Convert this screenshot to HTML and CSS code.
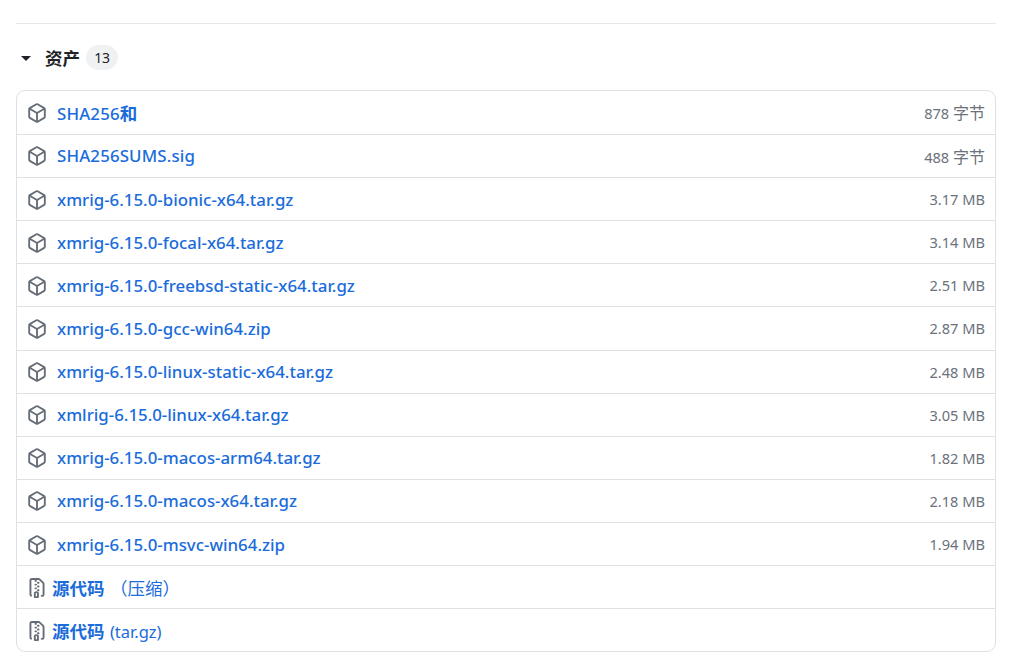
FILE: index.html
```html
<!DOCTYPE html>
<html lang="zh">
<head>
<meta charset="utf-8">
<title>资产</title>
<link rel="stylesheet" href="styles.css">
</head>
<body>
<svg class="defs" width="0" height="0">
<symbol id="pkg" viewBox="0 0 16 16"><path d="m8.878.392 5.25 3.045c.54.314.872.89.872 1.514v6.098a1.75 1.75 0 0 1-.872 1.514l-5.25 3.045a1.75 1.75 0 0 1-1.756 0l-5.25-3.045A1.75 1.75 0 0 1 1 11.049V4.951c0-.624.332-1.201.872-1.514L7.122.392a1.75 1.75 0 0 1 1.756 0ZM7.875 1.69l-4.63 2.685L8 7.133l4.755-2.758-4.63-2.685a.248.248 0 0 0-.25 0ZM2.5 5.677v5.372c0 .09.047.171.125.216l4.625 2.683V8.432Zm6.25 8.271 4.625-2.683a.25.25 0 0 0 .125-.216V5.677L8.75 8.432Z"/></symbol>
<symbol id="zip" viewBox="0 0 16 16"><path d="M3.5 1.75v11.5c0 .09.048.173.126.217a.75.75 0 0 1-.752 1.298A1.748 1.748 0 0 1 2 13.25V1.75C2 .784 2.784 0 3.75 0h5.586c.464 0 .909.185 1.237.513l2.914 2.914c.329.328.513.773.513 1.237v8.586A1.75 1.75 0 0 1 12.25 15h-.5a.75.75 0 0 1 0-1.5h.5a.25.25 0 0 0 .25-.25V4.664a.25.25 0 0 0-.073-.177L9.513 1.573a.25.25 0 0 0-.177-.073H7.25a.75.75 0 0 1 0 1.5h-.5a.75.75 0 0 1 0-1.5h-3a.25.25 0 0 0-.25.25Zm3.75 8.75h.5c.966 0 1.75.784 1.75 1.75v3a.75.75 0 0 1-.75.75h-2.5a.75.75 0 0 1-.75-.75v-3c0-.966.784-1.75 1.75-1.75ZM6 5.25a.75.75 0 0 1 .75-.75h.5a.75.75 0 0 1 0 1.5h-.5A.75.75 0 0 1 6 5.25Zm.75 2.25h.5a.75.75 0 0 1 0 1.5h-.5a.75.75 0 0 1 0-1.5ZM8 6.75A.75.75 0 0 1 8.75 6h.5a.75.75 0 0 1 0 1.5h-.5A.75.75 0 0 1 8 6.75ZM8.75 3h.5a.75.75 0 0 1 0 1.5h-.5a.75.75 0 0 1 0-1.5ZM8 9.75A.75.75 0 0 1 8.75 9h.5a.75.75 0 0 1 0 1.5h-.5A.75.75 0 0 1 8 9.75Zm-1 2.5v2.25h1v-2.25a.25.25 0 0 0-.25-.25h-.5a.25.25 0 0 0-.25.25Z"/></symbol>
</svg>
<main class="page">
<hr class="rule">
<div class="summary">
<span class="caret"></span>
<h2 class="title">资产</h2>
<span class="counter">13</span>
</div>
<ul class="assets">
<li class="row"><svg class="ico"><use href="#pkg"/></svg><a class="name name-caps">SHA256<span class="cjk">和</span></a><span class="size">878 <span class="unit">字节</span></span></li>
<li class="row"><svg class="ico"><use href="#pkg"/></svg><a class="name name-caps">SHA256SUMS.sig</a><span class="size">488 <span class="unit">字节</span></span></li>
<li class="row"><svg class="ico"><use href="#pkg"/></svg><a class="name">xmrig-6.15.0-bionic-x64.tar.gz</a><span class="size">3.17 MB</span></li>
<li class="row"><svg class="ico"><use href="#pkg"/></svg><a class="name">xmrig-6.15.0-focal-x64.tar.gz</a><span class="size">3.14 MB</span></li>
<li class="row"><svg class="ico"><use href="#pkg"/></svg><a class="name">xmrig-6.15.0-freebsd-static-x64.tar.gz</a><span class="size">2.51 MB</span></li>
<li class="row"><svg class="ico"><use href="#pkg"/></svg><a class="name">xmrig-6.15.0-gcc-win64.zip</a><span class="size">2.87 MB</span></li>
<li class="row"><svg class="ico"><use href="#pkg"/></svg><a class="name">xmrig-6.15.0-linux-static-x64.tar.gz</a><span class="size">2.48 MB</span></li>
<li class="row"><svg class="ico"><use href="#pkg"/></svg><a class="name">xmlrig-6.15.0-linux-x64.tar.gz</a><span class="size">3.05 MB</span></li>
<li class="row"><svg class="ico"><use href="#pkg"/></svg><a class="name">xmrig-6.15.0-macos-arm64.tar.gz</a><span class="size">1.82 MB</span></li>
<li class="row"><svg class="ico"><use href="#pkg"/></svg><a class="name">xmrig-6.15.0-macos-x64.tar.gz</a><span class="size">2.18 MB</span></li>
<li class="row"><svg class="ico"><use href="#pkg"/></svg><a class="name">xmrig-6.15.0-msvc-win64.zip</a><span class="size">1.94 MB</span></li>
<li class="row"><svg class="ico ico-zip"><use href="#zip"/></svg><a class="name"><b class="src">源代码</b> <span class="ext ext-cn">（压缩）</span></a></li>
<li class="row"><svg class="ico ico-zip"><use href="#zip"/></svg><a class="name"><b class="src">源代码</b> <span class="ext">(tar.gz)</span></a></li>
</ul>
</main>
</body>
</html>
```
FILE: styles.css
```css
* { box-sizing: border-box; }
html, body { margin: 0; padding: 0; background: #fff; }
body {
  font-family: "Noto Sans", "Noto Sans CJK SC", sans-serif;
  color: #1f2328;
  height: 663px;
  overflow: hidden;
}
.defs { position: absolute; }
.page { padding: 23px 28px 0 16px; }
.rule { margin: 0; height: 1.4px; border: 0; background: #e4e7eb; }
.summary {
  display: flex;
  align-items: center;
  height: 65.4px;
  padding: 1px 0 0 5px;
}
.caret {
  width: 0; height: 0;
  border-style: solid;
  border-width: 5px 5px 0;
  border-color: #1f2328 transparent transparent;
  margin-right: 14px;
  margin-top: 2px;
}
.title { margin: 0; font-size: 17.5px; font-weight: 600; line-height: 24px; }
.counter {
  margin-left: 6px;
  min-width: 32px;
  height: 25px;
  padding: 0 7px;
  border-radius: 13px;
  background: #eff1f3;
  font-size: 14px;
  line-height: 25px;
  text-align: center;
  letter-spacing: -0.3px;
}
.assets {
  list-style: none;
  margin: 0;
  padding: 0;
  border: 1.2px solid #dde1e6;
  border-radius: 9px;
}
.row {
  display: flex;
  align-items: center;
  height: 43.13px;
  padding: 0 10px 0 10px;
  border-top: 1.2px solid #dde1e6;
}
.row:first-child { border-top: 0; }
.ico { width: 20px; height: 20px; fill: #656d76; flex: none; margin: 1px 10px 0 0; }
.ico-zip { margin-right: 5px; }
.name { color: #1a6cdb; font-size: 16.85px; font-weight: 500; white-space: pre; flex: 1; }
.name-caps { letter-spacing: 0.15px; }
.cjk { font-weight: 700; font-size: 17.5px; }
.src { font-weight: 700; font-size: 17.5px; }
.ext { font-weight: 400; font-size: 16.5px; margin-left: 1px; }
.ext-cn { font-size: 17.5px; }
.size { color: #6b727b; font-size: 14.6px; }
.unit { font-size: 16px; }
```
